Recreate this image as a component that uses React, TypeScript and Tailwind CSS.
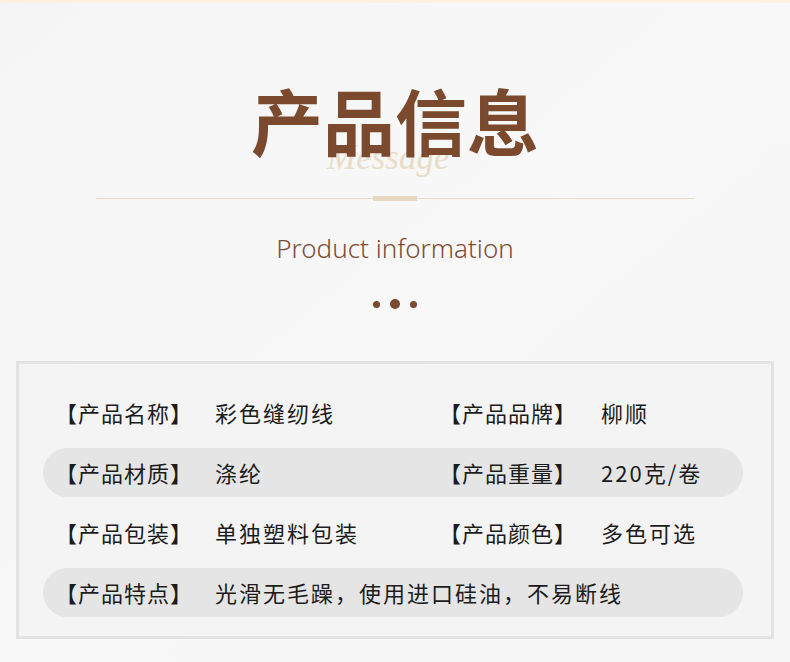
import React from 'react';

const rows: { label: string; value: string; label2?: string; value2?: string; shaded?: boolean }[] = [
  { label: '【产品名称】', value: '彩色缝纫线', label2: '【产品品牌】', value2: '柳顺' },
  { label: '【产品材质】', value: '涤纶', label2: '【产品重量】', value2: '220克/卷', shaded: true },
  { label: '【产品包装】', value: '单独塑料包装', label2: '【产品颜色】', value2: '多色可选' },
  { label: '【产品特点】', value: '光滑无毛躁，使用进口硅油，不易断线', shaded: true },
];

/** 产品信息卡片：标题 + 参数表 */
export default function App() {
  return (
    <div
      className="w-[790px] h-[662px] overflow-hidden bg-gradient-to-br from-[#f5f5f5] via-[#f8f8f8] to-[#f6f6f6]"
      style={{ fontFamily: '"Noto Sans", "Noto Sans CJK SC", sans-serif' }}
    >
      <div className="h-[3px] bg-[#fdf1e2]" />

      {/* 标题 */}
      <div className="flex justify-center pt-[80px]">
        <div className="relative">
          <span className="absolute left-[76px] top-[57px] z-0 text-[35px] italic leading-none text-[#e9ddc9] [font-family:'Liberation_Serif',serif]">
            Message
          </span>
          <h1 className="relative z-10 text-[72px] font-bold leading-none text-[#7b4a2e] [font-family:'Noto_Sans_CJK_SC',sans-serif]">
            产品信息
          </h1>
        </div>
      </div>

      {/* 分隔线 */}
      <div className="mx-[96px] mt-[41px] flex items-center">
        <div className="h-px flex-1 bg-[#eadac6]" />
        <div className="h-[5px] w-[44px] bg-[#e8d9c3]" />
        <div className="h-px flex-1 bg-[#eadac6]" />
      </div>

      <p className="mt-[34px] text-center text-[26px] font-light leading-none text-[#7d4d36]">
        Product information
      </p>

      <div className="mt-[38px] flex items-center justify-center gap-[10px]">
        <span className="h-[7px] w-[7px] rounded-full bg-[#7b4a2e]" />
        <span className="h-[10px] w-[10px] rounded-full bg-[#7b4a2e]" />
        <span className="h-[7px] w-[7px] rounded-full bg-[#7b4a2e]" />
      </div>

      {/* 参数表 */}
      <div className="mx-[16px] mt-[52px] border-[3px] border-[#e3e3e3] bg-[#f4f4f4] pb-[19px] pl-[24px] pr-[28px] pt-[24px]">
        <div className="flex flex-col gap-[11px]">
          {rows.map((r) => (
            <div
              key={r.label}
              className={`flex h-[49px] items-center rounded-full pl-[12px] text-[22px] tracking-[2px] text-[#1c1c1c] [font-family:'Noto_Sans_CJK_SC',sans-serif] ${
                r.shaded ? 'bg-[#e5e5e5]' : ''
              }`}
            >
              <div className="flex w-[384px]">
                <span className="w-[160px] shrink-0 tracking-[1px]">{r.label}</span>
                <span className={r.label2 ? '' : 'whitespace-nowrap'}>{r.value}</span>
              </div>
              {r.label2 && (
                <div className="flex">
                  <span className="w-[162px] shrink-0 tracking-[1px]">{r.label2}</span>
                  <span>{r.value2}</span>
                </div>
              )}
            </div>
          ))}
        </div>
      </div>
    </div>
  );
}
